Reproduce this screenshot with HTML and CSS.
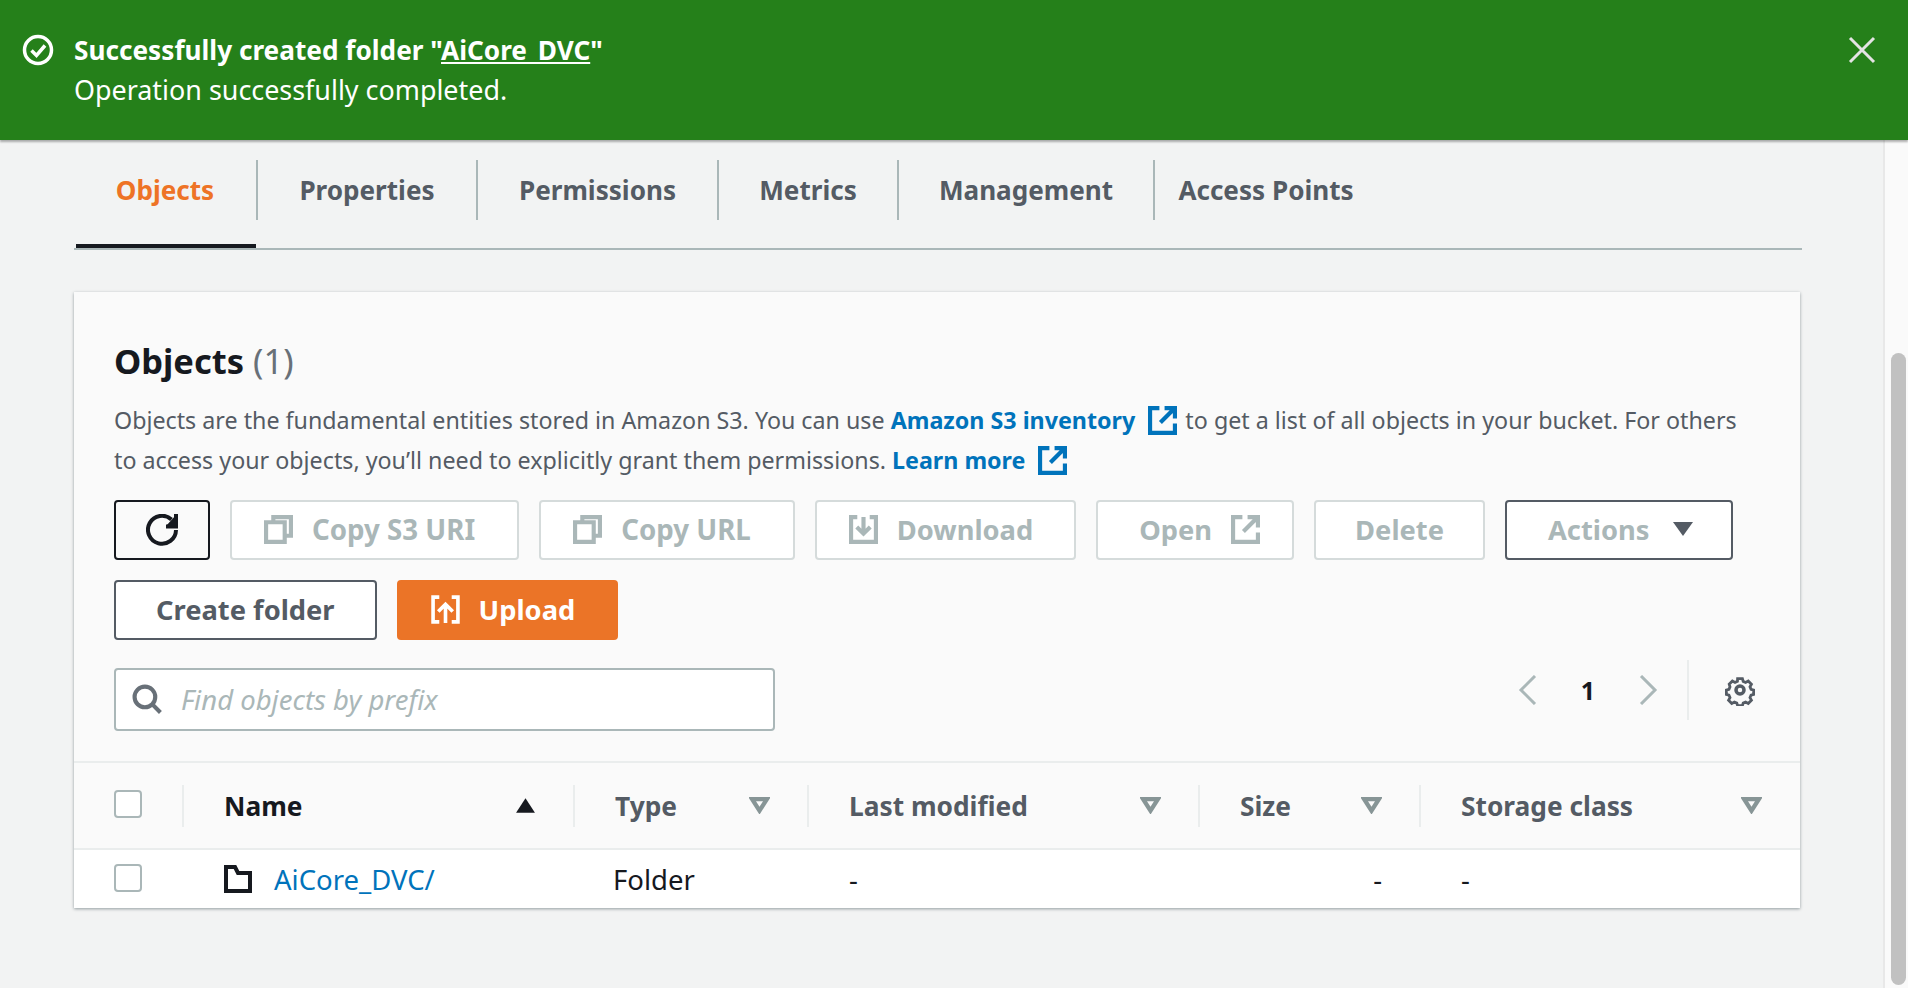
FILE: index.html
```html
<!DOCTYPE html>
<html lang="en">
<head>
    <meta charset="UTF-8">
    <meta name="viewport" content="width=device-width, initial-scale=1.0">
    <title>Objects</title>
    <link rel="stylesheet" href="styles.css">
</head>
<body>
    <div class="flash">
        <svg class="flash-icon" viewBox="0 0 32 32"><circle cx="16" cy="16" r="13.500"/><path d="M9.500 16.500l5 5 8.500-10"/></svg>
        <div class="flash-text">
            <div class="flash-title">Successfully created folder "<a href="#">AiCore_DVC</a>"</div>
            <div>Operation successfully completed.</div>
        </div>
        <svg class="flash-close" viewBox="0 0 28 28"><path d="M2 2l24 24M26 2L2 26"/></svg>
    </div>

    <div class="page">
        <div class="content">
            <div class="tabs">
                <div class="tab active">Objects</div>
                <div class="tab">Properties</div>
                <div class="tab">Permissions</div>
                <div class="tab">Metrics</div>
                <div class="tab">Management</div>
                <div class="tab last">Access Points</div>
            </div>

            <div class="card">
                <div class="card-head">
                    <h2>Objects <span class="count">(1)</span></h2>
                    <p class="desc">Objects are the fundamental entities stored in Amazon S3. You can use <a href="#">Amazon S3 inventory <svg class="ext" viewBox="0 0 28 28"><path d="M11 2H2v24h24v-9M16 2h10v10M26 2L12 16"/></svg></a> to get a list of all objects in your bucket. For others to access your objects, you’ll need to explicitly grant them permissions. <a href="#">Learn more <svg class="ext" viewBox="0 0 28 28"><path d="M11 2H2v24h24v-9M16 2h10v10M26 2L12 16"/></svg></a></p>

                    <div class="actions">
                        <button class="btn focus refresh"><svg class="refresh-ico" viewBox="0 0 32 32"><path d="M30 16A14 14 0 1 1 25.500 5.500"/><path d="M30 0v12.500H20"/><path class="solid" d="M30 1v11H20z"/></svg></button>
                        <button class="btn off lead copy"><svg class="ico" viewBox="0 0 28 28"><path d="M9 7V2h17v18h-6"/><path d="M2 7h18v19H2z"/></svg>Copy S3 URI</button>
                        <button class="btn off lead copy"><svg class="ico" viewBox="0 0 28 28"><path d="M9 7V2h17v18h-6"/><path d="M2 7h18v19H2z"/></svg>Copy URL</button>
                        <button class="btn off lead"><svg class="ico" viewBox="0 0 28 28"><path d="M8 2H2v24h24V2h-6"/><path d="M14 2v16M7.500 11.500l6.500 6.500 6.500-6.500"/></svg>Download</button>
                        <button class="btn off trail">Open<svg class="ico" viewBox="0 0 28 28"><path d="M11 2H2v24h24v-9M16 2h10v10M26 2L12 16"/></svg></button>
                        <button class="btn off delete">Delete</button>
                        <button class="btn dark-line off trail menu">Actions<svg class="caret" viewBox="0 0 22 16"><path d="M1 1h20L11 15z"/></svg></button>
                        <button class="btn dark-line create">Create folder</button>
                        <button class="btn primary lead"><svg class="ico upload-ico" viewBox="0 0 28 28"><path d="M8 2H2v24h6M20 2h6v24h-6"/><path d="M14 27V10M7 16l7-7 7 7"/></svg>Upload</button>
                    </div>

                    <div class="filter-row">
                        <div class="search">
                            <svg class="search-ico" viewBox="0 0 30 30"><circle cx="12.500" cy="12.500" r="10"/><path d="M19.500 19.500l8 8"/></svg>
                            <span>Find objects by prefix</span>
                        </div>
                        <div class="pager">
                            <svg class="chev" viewBox="0 0 20 30"><path d="M17 1L3 15l14 14"/></svg>
                            <span class="page-no">1</span>
                            <svg class="chev" viewBox="0 0 20 30"><path d="M3 1l14 14L3 29"/></svg>
                            <span class="pager-sep"></span>
                            <svg class="gear" viewBox="0 0 32 32"><path d="M13 2h6l1 3.500 3 1.300 3.300-1.800 4 4-1.800 3.300 1.300 3 3.200 1v5.400l-3.200 1-1.300 3 1.800 3.300-4 4-3.300-1.800-3 1.300-1 3.200h-6l-1-3.200-3-1.300-3.300 1.800-4-4 1.800-3.300-1.300-3-3.200-1v-5.400l3.200-1 1.300-3L2.500 9l4-4 3.300 1.800 3-1.300z" transform="translate(3.200 3) scale(.8)"/><circle cx="16" cy="16" r="4"/></svg>
                        </div>
                    </div>
                </div>

                <div class="table">
                    <div class="cell head"><span class="check"></span></div>
                    <div class="cell head sorted"><span>Name</span><svg class="sort" viewBox="0 0 20 16"><path d="M10 1l9 14H1z"/></svg></div>
                    <div class="cell head"><span>Type</span><svg class="sort" viewBox="0 0 20 16"><path d="M3 2h14l-7 11z"/></svg></div>
                    <div class="cell head"><span>Last modified</span><svg class="sort" viewBox="0 0 20 16"><path d="M3 2h14l-7 11z"/></svg></div>
                    <div class="cell head"><span>Size</span><svg class="sort" viewBox="0 0 20 16"><path d="M3 2h14l-7 11z"/></svg></div>
                    <div class="cell head last"><span>Storage class</span><svg class="sort" viewBox="0 0 20 16"><path d="M3 2h14l-7 11z"/></svg></div>

                    <div class="cell"><span class="check"></span></div>
                    <div class="cell name"><svg class="folder" viewBox="0 0 28 28"><path d="M2 2h9l3 6h12v18H2z"/></svg><a href="#">AiCore_DVC/</a></div>
                    <div class="cell kind">Folder</div>
                    <div class="cell">-</div>
                    <div class="cell right">-</div>
                    <div class="cell">-</div>
                </div>
            </div>
        </div>

        <div class="scrollbar"><div class="thumb"></div></div>
    </div>
</body>
</html>
```

FILE: styles.css
```css
* {
    box-sizing: border-box;
}

html, body {
    height: 100%;
}

body {
    margin: 0;
    overflow: hidden;
    display: flex;
    flex-direction: column;
    font-family: "Noto Sans", Arial, sans-serif;
    font-size: 27.5px;
    color: #16191f;
    background-color: #f2f3f3;
}

svg {
    flex: none;
    fill: none;
    stroke: currentColor;
    stroke-width: 4;
}

a {
    color: #0073bb;
    text-decoration: none;
}

/* green banner */
.flash {
    height: 140px;
    flex: none;
    display: flex;
    align-items: flex-start;
    padding: 30px 32px 0 22px;
    background-color: #25801a;
    color: white;
    box-shadow: 0 2px 2px rgba(0, 0, 0, 0.3);
    position: relative;
    font-size: 26.9px;
    line-height: 40px;
}

.flash-icon {
    width: 32px;
    height: 32px;
    margin: 4px 20px 0 0;
    stroke-width: 3.5;
}

.flash-text {
    flex: 1;
}

.flash-title {
    font-size: 26.2px;
    font-weight: 700;
}

.flash-title a {
    color: white;
    text-decoration: underline;
}

.flash-close {
    width: 28px;
    height: 28px;
    margin-top: 6px;
    stroke: #e4e4e4;
    stroke-width: 3;
}

.page {
    flex: 1;
    display: flex;
    min-height: 0;
}

.content {
    flex: 1;
    padding: 20px 81px 0 74px;
}

/* tabs */
.tabs {
    display: grid;
    grid-template-columns: 184px 220px 241px 180px 256px 222px;
    height: 90px;
    border-bottom: 2px solid #aab7b8;
    font-size: 26.1px;
    font-weight: 700;
    color: #545b64;
}

.tab {
    height: 60px;
    display: flex;
    align-items: center;
    justify-content: center;
    padding-bottom: 1px;
    border-right: 2px solid #aab7b8;
}

.tab.last {
    border-right: none;
}

.tab.active {
    color: #ee7326;
    position: relative;
}

.tab.active::after {
    content: "";
    position: absolute;
    left: 2px;
    right: 0;
    top: 84px;
    height: 4px;
    background-color: #16191f;
}

/* card */
.card {
    margin: 42px 2px 0 0;
    background-color: #fafafa;
    box-shadow: 0 1px 3px rgba(0, 28, 36, 0.4);
}

.card-head {
    padding: 49px 40px 30px 40px;
    border-bottom: 2px solid #eaeded;
    height: 471px;
}

h2 {
    margin: 0;
    font-size: 34.5px;
    line-height: 40px;
    font-weight: 700;
}

.count {
    font-weight: 400;
    color: #687078;
}

.desc {
    margin: 19px 0 0;
    padding-right: 20px;
    font-size: 23.25px;
    line-height: 40px;
    color: #545b64;
}

.desc a {
    font-weight: 700;
}

.ext {
    width: 29px;
    height: 29px;
    margin: 0 2px 0 7px;
    vertical-align: -6px;
}

.actions {
    display: flex;
    flex-wrap: wrap;
    gap: 20px;
    margin-top: 20px;
}

.btn {
    height: 60px;
    display: flex;
    align-items: center;
    gap: 19px;
    padding: 0 41px 2px;
    border: 2px solid #545b64;
    border-radius: 4px;
    background-color: white;
    font-family: inherit;
    font-size: 27.3px;
    font-weight: 700;
    color: #545b64;
}

.btn.lead {
    padding-left: 32px;
}

.btn.trail {
    padding-right: 32px;
}

.btn.copy {
    padding-right: 42px;
    font-size: 27.7px;
}

.btn.delete {
    padding: 0 39px 2px;
}

.btn.menu {
    padding-right: 37px;
}

.btn.create {
    padding: 0 40px 2px;
}

.btn.off {
    border-color: #d5dbdb;
    color: #aab7b8;
}

.btn.dark-line.off {
    border-color: #545b64;
}

.btn.focus {
    border-color: #16191f;
    background-color: #fafafa;
    color: #16191f;
}

.btn.refresh {
    width: 96px;
    padding: 0;
    justify-content: center;
}

.btn.primary {
    border-color: #eb7427;
    background-color: #eb7427;
    color: white;
}

.ico {
    width: 29px;
    height: 29px;
}

.upload-ico {
    stroke-width: 3.5;
}

.refresh-ico {
    width: 32px;
    height: 32px;
}

.solid {
    fill: currentColor;
    stroke: none;
}

.caret {
    width: 22px;
    height: 16px;
    margin-left: 4px;
    fill: #545b64;
    stroke: none;
}

/* search and pager */
.filter-row {
    display: flex;
    justify-content: space-between;
    margin-top: 28px;
}

.search {
    width: 661px;
    height: 63px;
    display: flex;
    align-items: center;
    gap: 18px;
    padding-left: 16px;
    border: 2px solid #aab7b8;
    border-radius: 4px;
    background-color: white;
    font-style: italic;
    color: #aab7b8;
}

.search-ico {
    width: 31px;
    height: 31px;
    color: #687078;
}

.pager {
    display: flex;
    align-items: center;
    height: 60px;
    margin: -8px 4px 0 0;
}

.chev {
    width: 20px;
    height: 30px;
    color: #aab7b8;
    stroke-width: 3;
}

.page-no {
    width: 100px;
    text-align: center;
    font-size: 25px;
    font-weight: 700;
}

.pager-sep {
    width: 2px;
    height: 60px;
    margin: 0 35px 0 29px;
    background-color: #eaeded;
}

.gear {
    width: 32px;
    height: 32px;
    color: #545b64;
    stroke-width: 3.5;
}

/* table */
.table {
    display: grid;
    grid-template-columns: 109px 391px 234px 391px 221px 380px;
    grid-template-rows: 85px 60px;
}

.cell {
    display: flex;
    align-items: center;
    justify-content: space-between;
    padding: 0 38px 0 41px;
    background-color: white;
    border-top: 2px solid #eaeded;
}

.cell.head {
    background-color: #fafafa;
    border-top: none;
    font-size: 26.3px;
    font-weight: 700;
    color: #545b64;
    position: relative;
}

.cell.head::after {
    content: "";
    position: absolute;
    right: -1px;
    top: 22px;
    height: 42px;
    width: 2px;
    background-color: #eaeded;
    z-index: 1;
}

.cell.head.last::after {
    display: none;
}

.cell.sorted {
    color: #16191f;
}

.cell.right {
    justify-content: flex-end;
}

.cell.kind {
    padding-left: 39px;
}

.cell.name {
    justify-content: flex-start;
    gap: 22px;
}

.check {
    width: 28px;
    height: 28px;
    margin: -3px 0 0 -1px;
    border: 2px solid #aab7b8;
    border-radius: 4px;
    background-color: white;
}

.sort {
    width: 21px;
    height: 17px;
    color: #879596;
}

.sorted .sort {
    fill: #16191f;
    stroke: none;
}

.folder {
    width: 28px;
    height: 28px;
    color: #16191f;
}

/* window scrollbar */
.scrollbar {
    flex: none;
    width: 25px;
    padding: 213px 2px 3px 6px;
    background-color: #fafafa;
    border-left: 2px solid #e8e8e8;
}

.thumb {
    height: 100%;
    border-radius: 8px;
    background-color: #c1c1c1;
}
```
